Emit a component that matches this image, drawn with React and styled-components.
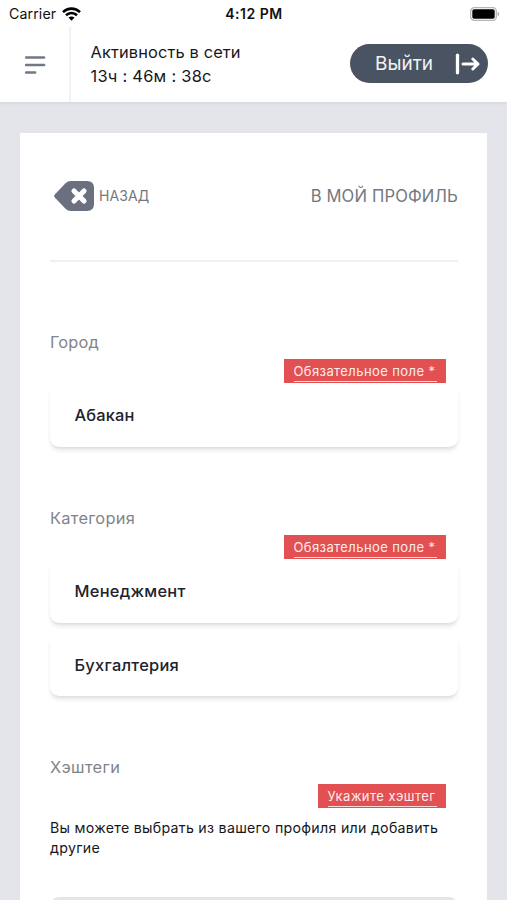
import React from "react";
import styled, { createGlobalStyle } from "styled-components";

const GlobalStyle = createGlobalStyle`
  *, *::before, *::after { box-sizing: border-box; }
  html, body { margin: 0; height: 900px; overflow: hidden; }
  body { font-family: Inter, "Liberation Sans", sans-serif; background: #e4e5ea; color: #15171c; }
`;

const Screen = styled.div`
  height: 900px;
  overflow: hidden;
  display: flex;
  flex-direction: column;
  background: #e4e5ea;
`;

const Header = styled.header`
  flex: none;
  height: 102px;
  background: #fff;
  box-shadow: 0 1px 3px rgba(0, 0, 0, 0.08);
`;

const StatusBar = styled.div`
  height: 27px;
  padding: 0 7px 0 9px;
  display: grid;
  grid-template-columns: 1fr auto 1fr;
  align-items: center;
  color: #111;
`;

const Carrier = styled.div`
  display: flex;
  align-items: center;
  gap: 6px;
  font-size: 14.2px;
  letter-spacing: 0.1px;
  line-height: 27px;
`;

const Clock = styled.time`
  font-size: 14px;
  font-weight: 600;
  line-height: 27px;
  letter-spacing: 0.5px;
  margin-right: 1px;
`;

const BatterySlot = styled.div`
  display: flex;
  justify-content: flex-end;
`;

const Toolbar = styled.div`
  height: 75px;
  display: flex;
  align-items: stretch;
`;

const MenuButton = styled.button`
  width: 71px;
  padding: 0 0 0 24px;
  border: 0;
  border-right: 2px solid #f2f2f5;
  background: none;
  display: flex;
  align-items: center;
`;

const Activity = styled.div`
  flex: 1;
  padding: 13px 0 0 19.5px;
  font-size: 16.4px;
  line-height: 24px;
  white-space: nowrap;
`;

const Line = styled.div`
  letter-spacing: ${(p) => p.$spacing || "0"};
`;

const LogoutButton = styled.button`
  width: 138px;
  height: 39px;
  margin: 17px 19px 0 0;
  padding: 0 7px 0 25px;
  border: 0;
  border-radius: 20px;
  background: #4a5361;
  color: #f1f3f6;
  display: flex;
  align-items: center;
  justify-content: space-between;
  font: 400 19px/41px Inter, sans-serif;
`;

const Card = styled.main`
  flex: none;
  height: 900px;
  margin: 31px 20px 0;
  padding: 0 29px 0 30px;
  background: #fff;
`;

const CardNav = styled.nav`
  height: 129px;
  border-bottom: 2px solid #f0f0f2;
  display: flex;
  justify-content: space-between;
  color: #737780;
  line-height: 30px;
  padding-top: 48px;
`;

const BackLink = styled.a`
  display: flex;
  height: 30px;
  gap: 5px;
  padding-left: 4px;
  font-size: 14px;
  letter-spacing: 0.1px;
`;

const ProfileLink = styled.a`
  font-size: 16.6px;
  line-height: 31px;
  height: 30px;
  letter-spacing: 0.15px;
`;

const Field = styled.section`
  padding-top: ${(p) => p.$top}px;
`;

const FieldLabel = styled.h2`
  margin: 0;
  font-size: 16.4px;
  font-weight: 400;
  line-height: 24px;
  color: #81848a;
  letter-spacing: ${(p) => p.$spacing || "0"};
`;

const TagRow = styled.div`
  display: flex;
  justify-content: flex-end;
  padding: 5px 12px 0 0;
`;

const Tag = styled.div`
  height: 24px;
  width: ${(p) => p.$width}px;
  padding: 2px 0 0 9.5px;
  background: #e25051;
  color: #ffeded;
  font-size: 13px;
  line-height: 21px;
`;

const TagText = styled.span`
  display: block;
  width: ${(p) => p.$width}px;
  height: 21px;
  border-bottom: 1px solid #ffdada;
  white-space: nowrap;
  letter-spacing: ${(p) => p.$spacing};
`;

const Options = styled.div`
  display: flex;
  flex-direction: column;
  gap: 11px;
`;

const Option = styled.div`
  height: ${(p) => p.$height || 62}px;
  padding: 0 24.5px 1px;
  border-radius: 9px;
  background: #fff;
  box-shadow: 0 4px 5px -1px rgba(0, 0, 0, 0.11), 0 2px 3px -1px rgba(0, 0, 0, 0.05);
  display: flex;
  align-items: center;
  font-size: 16.4px;
  font-weight: 500;
  color: #20222d;
  letter-spacing: ${(p) => p.$spacing || "0"};
`;

const Hint = styled.p`
  margin: 10px 0 0;
  font-size: 14.2px;
  line-height: 19.5px;
  white-space: nowrap;
  letter-spacing: 0.28px;
`;

const HashtagBox = styled.div`
  height: 80px;
  margin-top: 40px;
  border-radius: 9px;
  background: #e4e5ea;
`;

function WifiIcon() {
  return (
    <svg width="19" height="14" viewBox="0 0 19 14" fill="none" stroke="#000" strokeWidth="2.6">
      <path d="M1 5.1C5.7.5 13.300.5 18 5.100" />
      <path d="M4 8.300C7.100 5.300 11.900 5.300 15 8.300" />
      <path d="M9.500 13.700 6.500 10.600c1.700-1.500 4.300-1.500 6 0Z" fill="#000" stroke="none" />
    </svg>
  );
}

function BatteryIcon() {
  return (
    <svg width="30" height="14" viewBox="0 0 30 14">
      <rect x=".7" y=".7" width="25.600" height="12.600" rx="3.600" fill="#fff" stroke="#b5b5b5" strokeWidth="1.300" />
      <rect x="2.300" y="2.300" width="22.400" height="9.400" rx="1.800" fill="#000" />
      <path d="M27.700 4.700c2 .7 2 3.900 0 4.600Z" fill="#aaa" />
    </svg>
  );
}

function MenuIcon() {
  return (
    <svg width="22" height="20" viewBox="0 0 22 20" stroke="#737886" strokeWidth="2.700" strokeLinecap="round">
      <path d="M2.200 2.500H20M2.200 10H20M2.200 17.500h8.900" />
    </svg>
  );
}

function LogoutIcon() {
  return (
    <svg width="26" height="22" viewBox="0 0 26 22" fill="none" stroke="#fff" strokeLinecap="round" strokeLinejoin="round">
      <path d="M2.500 2.200v17.600" strokeWidth="3.300" />
      <path d="M8 11h15M17.800 6 23 11l-5.200 5" strokeWidth="3" />
    </svg>
  );
}

function BackIcon() {
  return (
    <svg width="40" height="30" viewBox="0 0 40 30">
      <path d="M.8 13.600 11.500 2.300Q13.700 0 17 0H33Q40 0 40 7V23Q40 30 33 30H17Q13.700 30 11.500 27.700L.8 16.400Q-.5 15 .8 13.600Z" fill="#6b7080" />
      <path d="m20 10 10 10m0-10L20 20" stroke="#fff" strokeWidth="5.200" strokeLinecap="round" />
    </svg>
  );
}

export default function App() {
  return (
    <Screen>
      <GlobalStyle />
      <Header>
        <StatusBar>
          <Carrier>Carrier <WifiIcon /></Carrier>
          <Clock>4:12 PM</Clock>
          <BatterySlot><BatteryIcon /></BatterySlot>
        </StatusBar>
        <Toolbar>
          <MenuButton aria-label="Меню"><MenuIcon /></MenuButton>
          <Activity>
            <Line $spacing="0.13px">Активность в сети</Line>
            <Line $spacing="0.27px">13ч : 46м : 38с</Line>
          </Activity>
          <LogoutButton>Выйти <LogoutIcon /></LogoutButton>
        </Toolbar>
      </Header>
      <Card>
        <CardNav>
          <BackLink><BackIcon />НАЗАД</BackLink>
          <ProfileLink>В МОЙ ПРОФИЛЬ</ProfileLink>
        </CardNav>
        <Field $top={68}>
          <FieldLabel $spacing="0.15px">Город</FieldLabel>
          <TagRow><Tag $width={162}><TagText $width={143} $spacing="0.41px">Обязательное поле *</TagText></Tag></TagRow>
          <Options><Option $height={64} $spacing="0.15px">Абакан</Option></Options>
        </Field>
        <Field $top={59}>
          <FieldLabel $spacing="0.27px">Категория</FieldLabel>
          <TagRow><Tag $width={162}><TagText $width={143} $spacing="0.41px">Обязательное поле *</TagText></Tag></TagRow>
          <Options>
            <Option $height={64} $spacing="0.27px">Менеджмент</Option>
            <Option $spacing="0.27px">Бухгалтерия</Option>
          </Options>
        </Field>
        <Field $top={59}>
          <FieldLabel $spacing="0.32px">Хэштеги</FieldLabel>
          <TagRow><Tag $width={128}><TagText $width={109} $spacing="0.46px">Укажите хэштег</TagText></Tag></TagRow>
          <Hint>Вы можете выбрать из вашего профиля или добавить<br />другие</Hint>
          <HashtagBox />
        </Field>
      </Card>
    </Screen>
  );
}
